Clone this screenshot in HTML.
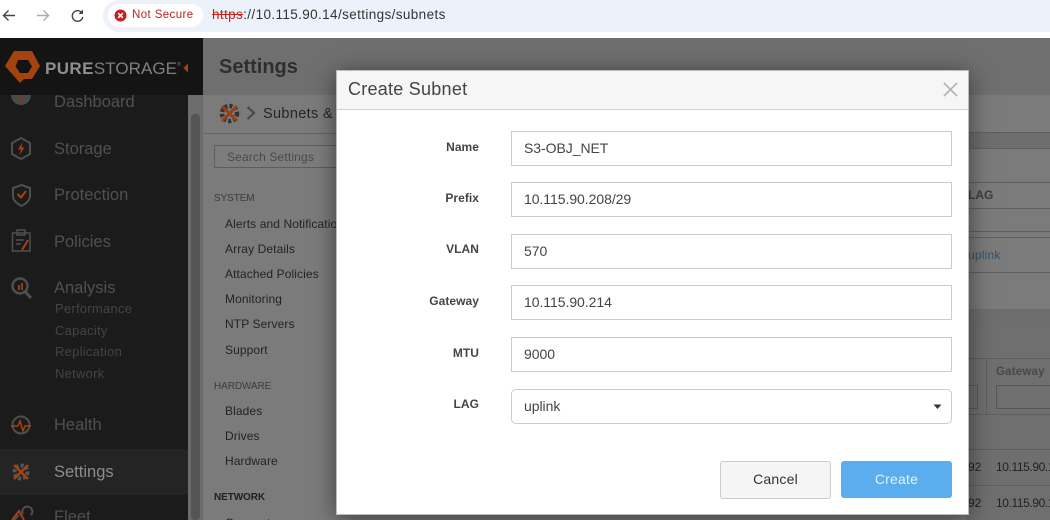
<!DOCTYPE html>
<html><head><meta charset="utf-8">
<style>
html,body{margin:0;padding:0;width:1050px;height:520px;overflow:hidden}
#r{width:1050px;height:520px;overflow:hidden;position:relative;background:#7b7b7b;font-family:"Liberation Sans",sans-serif}
.a{position:absolute;white-space:nowrap}
.nav{left:54px;font-size:16.5px;color:#505050;letter-spacing:0;line-height:20px}
.sub{left:55px;font-size:13px;color:#444;letter-spacing:.25px;line-height:16px}
.item{left:225px;font-size:12px;color:#232323;line-height:14px;letter-spacing:.1px}
.sec{left:214px;font-size:10px;color:#3c3c3c;line-height:12px;letter-spacing:-.1px}
.lbl{font-size:12px;font-weight:bold;color:#444;right:571px;line-height:14px;letter-spacing:.05px}
.inp{left:511px;width:439px;height:33px;border:1px solid #ccc;background:#fff;font-size:14px;color:#444;line-height:33px;text-indent:12px;letter-spacing:-.05px}
.ln{height:1px;background:#5f5f5f;left:966px;width:84px}
</style></head><body><div id="r">
<!-- browser bar -->
<div class="a" style="left:0;top:0;width:1050px;height:38px;background:#fff"></div>
<div class="a" style="left:103px;top:0;width:947px;height:32px;background:#edf2fa;border-radius:16px 0 0 16px"></div>
<div class="a" style="left:108px;top:4px;width:95px;height:23px;background:#fff;border-radius:12px"></div>
<svg class="a" style="left:0;top:0" width="110" height="32" fill="none">
<path d="M15 15.5H4M8.500 10.500L3.500 15.500L8.500 20.500" stroke="#444" stroke-width="1.400"/>
<path d="M48 15.500H37M43.500 10.500L48.500 15.500L43.500 20.500" stroke="#aaa" stroke-width="1.400"/>
<path d="M82 13a5.300 5.300 0 1 0 .8 4" stroke="#444" stroke-width="1.400"/><path d="M83 9.500V14H78.500Z" fill="#444"/>
</svg>
<svg class="a" style="left:114px;top:9px" width="13" height="13"><circle cx="6.500" cy="6.500" r="6" fill="#c5221f"/><path d="M4.200 4.200L8.800 8.800M8.800 4.200L4.200 8.800" stroke="#fff" stroke-width="1.500"/></svg>
<div class="a" style="left:132px;top:8px;font-size:11.500px;line-height:15px;color:#b3261e;letter-spacing:.4px">Not Secure</div>
<div class="a" style="left:212px;top:7px;font-size:13.500px;line-height:16px;color:#333;letter-spacing:.38px"><span style="color:#c5221f;text-decoration:line-through">https</span>://10.115.90.14/settings/subnets</div>

<!-- sidebar -->
<div class="a" style="left:0;top:38px;width:188px;height:482px;background:#1b1b1b"></div>
<div class="a" style="left:0;top:449px;width:188px;height:46px;background:#242424"></div>
<div class="a" style="left:188px;top:95px;width:15px;height:425px;background:#6c6c6c"></div>
<div class="a" style="left:191px;top:114px;width:9px;height:406px;background:#555;border-radius:4px"></div>
<div class="a" style="left:0;top:38px;width:203px;height:57px;background:#141414"></div>
<svg class="a" style="left:0;top:38px" width="45" height="50"><path fill-rule="evenodd" transform="translate(0,-38)" d="M14 51H32L40 66L32 79H24L20 83L5 66ZM18 60H28L32 66.500L28 73H20L15.500 66.500Z" fill="#a5430f"/></svg>
<div class="a" style="left:45px;top:54px;font-size:17px;line-height:22px;color:#7f7f7f;letter-spacing:.05px"><b style="color:#8f8f8f;letter-spacing:.4px">PURE</b>STORAGE<span style="font-size:5px;vertical-align:8px">®</span></div>
<svg class="a" style="left:183px;top:63px" width="6" height="10"><path d="M5 .5V9.500L.5 5Z" fill="#a5430f"/></svg>

<div class="a nav" style="top:92px;clip-path:inset(3px 0 -20px 0)">Dashboard</div>
<div class="a nav" style="top:139px">Storage</div>
<div class="a nav" style="top:185px">Protection</div>
<div class="a nav" style="top:232px">Policies</div>
<div class="a nav" style="top:278px">Analysis</div>
<div class="a sub" style="top:301px">Performance</div>
<div class="a sub" style="top:323px">Capacity</div>
<div class="a sub" style="top:344px">Replication</div>
<div class="a sub" style="top:366px">Network</div>
<div class="a nav" style="top:415px">Health</div>
<div class="a nav" style="top:462px;color:#8c8c8c">Settings</div>
<div class="a nav" style="top:507px">Fleet</div>

<svg class="a" style="left:10px;top:95px" width="24" height="425" fill="none" stroke="#4f4f4f" stroke-width="2">
<path d="M1 0a10 10 0 0 0 20 0Z" fill="#4a4a4a" stroke="none"/><path d="M10 1L12 6" stroke="#8a3510"/>
<path d="M11 43L20 48V59L11 64L2 59V48Z"/><path d="M12.500 47L8 54.500H11L9.500 60L14.500 52.500H11.500Z" fill="#a5430f" stroke="none"/>
<path d="M11.500 90L20 93V101C20 106 15 109 11.500 111C8 109 3 106 3 101V93Z"/><path d="M7.500 99L11 102.500L16 96" stroke="#a5430f"/>
<path d="M2.500 138H20V156H2.500Z" stroke-width="1.500"/><path d="M7 135H15V140H7Z" stroke-width="1.500"/><path d="M6 145H14M6 149H11" stroke-width="1.500"/><path d="M18 145L12 155" stroke="#a5430f"/>
<circle cx="10" cy="191" r="7.500" stroke-width="2.500"/><path d="M15.500 197L21 203" stroke-width="3"/><path d="M9 195V190M12 195V188" stroke="#a5430f" stroke-width="1.800"/>
<circle cx="11" cy="330" r="8.500" stroke-width="2"/><path d="M1 331H8L10 326L13 336L15 331H21" stroke="#a5430f" stroke-width="1.500"/>
<circle cx="11" cy="377" r="6.500" stroke-width="4" stroke-dasharray="3 2" stroke="#555"/><path d="M4 370L18 384M18 370L4 384" stroke="#a5430f" stroke-width="2.500"/>
<path d="M9 420L4 425M13 419a5 5 0 1 1 8 1" stroke-width="2"/><path d="M2 425L9 416L14 425" stroke="#a5430f" stroke-width="2"/>
</svg>

<!-- main -->
<div class="a" style="left:203px;top:38px;width:847px;height:57px;background:#6f6f6f"></div>
<div class="a" style="left:203px;top:95px;width:847px;height:38px;background:#7b7b7b;border-bottom:1px solid #656565"></div>
<div class="a" style="left:219px;top:55px;font-size:20px;line-height:24px;font-weight:bold;color:#2e2e2e">Settings</div>
<svg class="a" style="left:218px;top:102px" width="24" height="24" fill="none"><circle cx="11.500" cy="11.500" r="7.500" stroke="#333" stroke-width="4.500" stroke-dasharray="3 2"/><path d="M4 4L19 19M19 4L4 19" stroke="#96401a" stroke-width="3"/></svg>
<svg class="a" style="left:246px;top:106px" width="10" height="14" fill="none"><path d="M1.500 1L8 7L1.500 13" stroke="#4a4a4a" stroke-width="2.200"/></svg>
<div class="a" style="left:263px;top:105px;font-size:14.500px;line-height:18px;color:#262626;letter-spacing:.35px">Subnets &amp;</div>
<div class="a" style="left:214px;top:145px;width:130px;height:21px;border:1px solid #5d5d5d;background:#7d7d7d"></div>
<div class="a" style="left:227px;top:150px;font-size:12px;line-height:14px;color:#4a4a4a;letter-spacing:.15px">Search Settings</div>
<div class="a sec" style="top:193px">SYSTEM</div>
<div class="a item" style="top:217px">Alerts and Notifications</div>
<div class="a item" style="top:242px">Array Details</div>
<div class="a item" style="top:267px">Attached Policies</div>
<div class="a item" style="top:292px">Monitoring</div>
<div class="a item" style="top:317px">NTP Servers</div>
<div class="a item" style="top:343px">Support</div>
<div class="a sec" style="top:381px">HARDWARE</div>
<div class="a item" style="top:404px">Blades</div>
<div class="a item" style="top:429px">Drives</div>
<div class="a item" style="top:454px">Hardware</div>
<div class="a sec" style="top:492px;color:#1f1f1f;font-weight:bold">NETWORK</div>
<div class="a item" style="top:516px">Connectors</div>

<!-- right background -->
<div class="a" style="left:950px;top:95px;width:100px;height:425px;background:#7b7b7b"></div>
<div class="a" style="left:966px;top:132px;width:84px;height:17px;background:#6e6e6e"></div>
<div class="a ln" style="top:132px"></div>
<div class="a ln" style="top:148px"></div>
<div class="a ln" style="top:182px"></div>
<div class="a ln" style="top:208px"></div>
<div class="a ln" style="top:231px"></div>
<div class="a ln" style="top:237px"></div>
<div class="a ln" style="top:272px"></div>
<div class="a ln" style="top:309px"></div>
<div class="a" style="left:966px;top:309px;width:84px;height:16px;background:#6e6e6e"></div>
<div class="a ln" style="top:325px"></div>
<div class="a" style="left:968px;top:188px;font-size:12px;line-height:14px;font-weight:bold;color:#3c3c3c">LAG</div>
<div class="a" style="left:968px;top:248px;font-size:12px;line-height:14px;color:#2f536f;letter-spacing:.2px">uplink</div>
<div class="a" style="left:966px;top:325px;width:84px;height:195px;background:#6f6f6f"></div>
<div class="a ln" style="top:358px"></div>
<div class="a" style="left:986px;top:358px;width:1px;height:56px;background:#5f5f5f"></div>
<div class="a ln" style="top:414px"></div>
<div class="a ln" style="top:449px"></div>
<div class="a ln" style="top:485px"></div>
<div class="a" style="left:996px;top:365px;font-size:11.500px;line-height:14px;font-weight:bold;color:#484848;letter-spacing:.2px">Gateway</div>
<div class="a" style="left:996px;top:385px;width:60px;height:22px;border:1px solid #585858"></div>
<div class="a" style="left:968px;top:385px;width:9px;height:22px;border:1px solid #585858;border-left:0"></div>
<div class="a" style="left:968px;top:460px;font-size:12px;line-height:14px;color:#222">92</div>
<div class="a" style="left:968px;top:496px;font-size:12px;line-height:14px;color:#222">92</div>
<div class="a" style="left:996px;top:460px;font-size:12px;line-height:14px;color:#222;letter-spacing:-.4px">10.115.90.1</div>
<div class="a" style="left:996px;top:496px;font-size:12px;line-height:14px;color:#222;letter-spacing:-.4px">10.115.90.1</div>

<!-- dialog -->
<div class="a" style="left:336px;top:70px;width:633px;height:445px;background:#fff;border:1px solid #bbb;box-sizing:border-box;box-shadow:0 4px 22px rgba(0,0,0,.5)"></div>
<div class="a" style="left:337px;top:71px;width:631px;height:38px;background:#f6f6f6;border-bottom:1px solid #d2d2d2"></div>
<div class="a" style="left:348px;top:78px;font-size:18px;line-height:22px;color:#444;letter-spacing:.25px">Create Subnet</div>
<svg class="a" style="left:942px;top:81px" width="16" height="16" fill="none"><path d="M2 2L15 15M15 2L2 15" stroke="#b5b5b5" stroke-width="1.800"/></svg>

<div class="a lbl" style="top:140px">Name</div>
<div class="a inp" style="top:131px">S3-OBJ_NET</div>
<div class="a lbl" style="top:191px">Prefix</div>
<div class="a inp" style="top:182px">10.115.90.208/29</div>
<div class="a lbl" style="top:242px">VLAN</div>
<div class="a inp" style="top:234px">570</div>
<div class="a lbl" style="top:294px">Gateway</div>
<div class="a inp" style="top:285px">10.115.90.214</div>
<div class="a lbl" style="top:346px">MTU</div>
<div class="a inp" style="top:337px">9000</div>
<div class="a lbl" style="top:397px">LAG</div>
<div class="a inp" style="top:389px;border-radius:5px">uplink</div>
<svg class="a" style="left:933px;top:404px" width="9" height="6"><path d="M.5 .5H8.500L4.500 5Z" fill="#333"/></svg>

<div class="a" style="left:720px;top:461px;width:109px;height:36px;background:#f5f5f5;border:1px solid #ccc;border-radius:3px;text-align:center;font-size:14px;line-height:35px;color:#333;letter-spacing:.2px">Cancel</div>
<div class="a" style="left:841px;top:461px;width:111px;height:37px;background:#5aaeee;border-radius:3px;text-align:center;font-size:14px;line-height:36px;color:#e4f2fc;letter-spacing:.2px">Create</div>
</div></body></html>
